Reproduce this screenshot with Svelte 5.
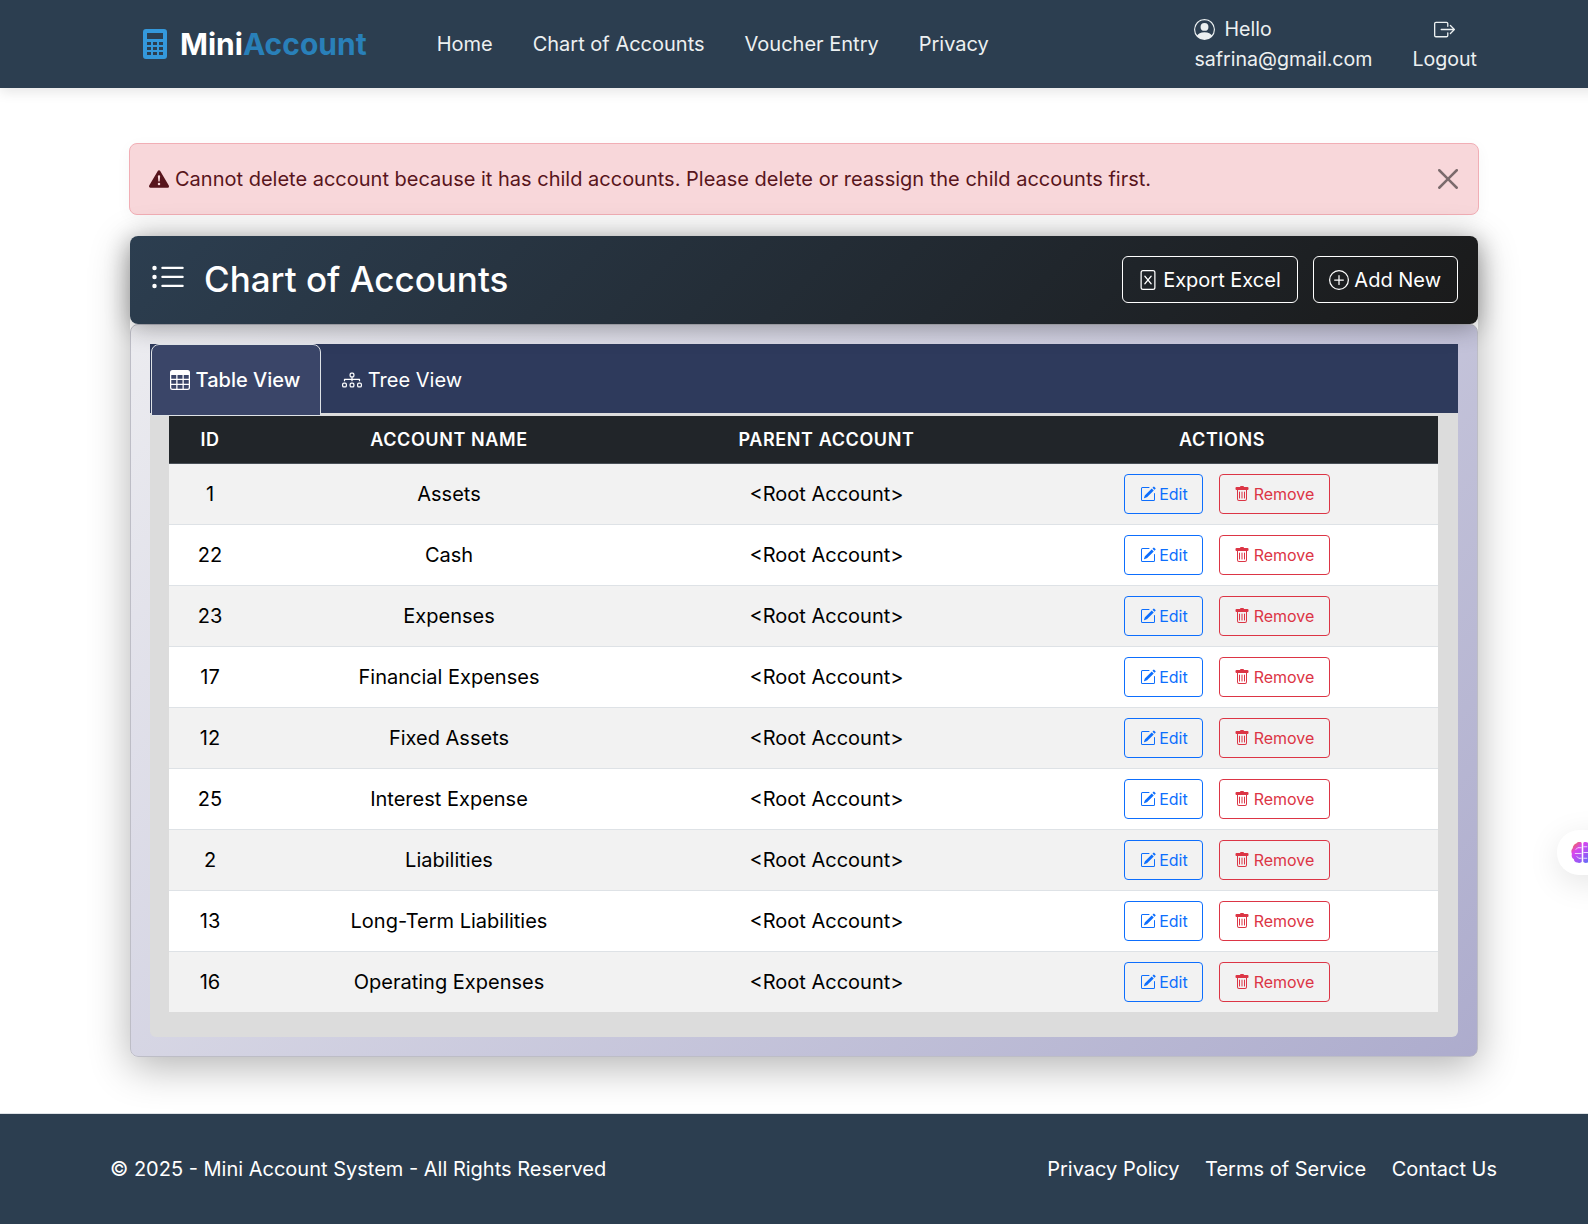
<script>
  const rows = [
    [1, 'Assets'], [22, 'Cash'], [23, 'Expenses'], [17, 'Financial Expenses'], [12, 'Fixed Assets'],
    [25, 'Interest Expense'], [2, 'Liabilities'], [13, 'Long-Term Liabilities'], [16, 'Operating Expenses']
  ];
</script>

<div class="page">
  <header class="nav">
    <a class="brand" href="#top">
      <svg class="calc" viewBox="0 0 24 30"><path fill-rule="evenodd" d="M3 0h18a3 3 0 0 1 3 3v24a3 3 0 0 1-3 3H3a3 3 0 0 1-3-3V3a3 3 0 0 1 3-3zM4 4v6h16V4zM4 13v3h4v-3zm6 0v3h4v-3zm6 0v3h4v-3zM4 18v3h4v-3zm6 0v3h4v-3zm6 0v3h4v-3zM4 23v3h4v-3zm6 0v3h4v-3zm6 0v3h4v-3z"/></svg>
      <span class="mini">Mini</span><span class="acct">Account</span>
    </a>
    <nav class="links">
      <a href="#top">Home</a><a href="#top">Chart of Accounts</a><a href="#top">Voucher Entry</a><a href="#top">Privacy</a>
    </nav>
    <div class="user">
      <a href="#top" class="hello">
        <span class="line"><svg class="i21 hi" viewBox="0 0 16 16"><path d="M11 6a3 3 0 1 1-6 0 3 3 0 0 1 6 0z"/><path fill-rule="evenodd" d="M0 8a8 8 0 1 1 16 0A8 8 0 0 1 0 8zm8-7a7 7 0 0 0-5.468 11.37C3.242 11.226 4.805 10 8 10s4.757 1.225 5.468 2.37A7 7 0 0 0 8 1z"/></svg>Hello</span>
        <span class="line">safrina@gmail.com</span>
      </a>
      <a href="#top" class="logout">
        <span class="line center"><svg class="i21" viewBox="0 0 16 16"><path fill-rule="evenodd" d="M10 12.5a.5.5 0 0 1-.5.5h-8a.5.5 0 0 1-.5-.5v-9a.5.5 0 0 1 .5-.5h8a.5.5 0 0 1 .5.5v2a.5.5 0 0 0 1 0v-2A1.5 1.5 0 0 0 9.5 2h-8A1.5 1.5 0 0 0 0 3.5v9A1.5 1.5 0 0 0 1.5 14h8a1.5 1.5 0 0 0 1.5-1.5v-2a.5.5 0 0 0-1 0v2z"/><path fill-rule="evenodd" d="M15.854 8.354a.5.5 0 0 0 0-.708l-3-3a.5.5 0 0 0-.708.708L14.293 7.5H5.5a.5.5 0 0 0 0 1h8.793l-2.147 2.146a.5.5 0 0 0 .708.708l3-3z"/></svg></span>
        <span class="line">Logout</span>
      </a>
    </div>
  </header>

  <main class="main">
    <div class="alert">
      <svg class="i20 warn" viewBox="0 0 16 16"><path d="M8.982 1.566a1.13 1.13 0 0 0-1.96 0L.165 13.233c-.457.778.091 1.767.98 1.767h13.713c.889 0 1.438-.99.98-1.767L8.982 1.566zM8 5c.535 0 .954.462.9.995l-.35 3.507a.552.552 0 0 1-1.1 0L7.1 5.995A.905.905 0 0 1 8 5zm.002 6a1 1 0 1 1 0 2 1 1 0 0 1 0-2z"/></svg>
      <span class="msg">Cannot delete account because it has child accounts. Please delete or reassign the child accounts first.</span>
      <svg class="close" viewBox="0 0 16 16"><path d="M.293.293a1 1 0 0 1 1.414 0L8 6.586 14.293.293a1 1 0 1 1 1.414 1.414L9.414 8l6.293 6.293a1 1 0 0 1-1.414 1.414L8 9.414l-6.293 6.293a1 1 0 0 1-1.414-1.414L6.586 8 .293 1.707a1 1 0 0 1 0-1.414z"/></svg>
    </div>

    <section class="card">
      <div class="card-head">
        <div class="title">
          <svg class="list" viewBox="0 0 16 16"><path fill-rule="evenodd" d="M5 11.5a.5.5 0 0 1 .5-.5h9a.5.5 0 0 1 0 1h-9a.5.5 0 0 1-.5-.5zm0-4a.5.5 0 0 1 .5-.5h9a.5.5 0 0 1 0 1h-9a.5.5 0 0 1-.5-.5zm0-4a.5.5 0 0 1 .5-.5h9a.5.5 0 0 1 0 1h-9a.5.5 0 0 1-.5-.5zm-3 1a1 1 0 1 0 0-2 1 1 0 0 0 0 2zm0 4a1 1 0 1 0 0-2 1 1 0 0 0 0 2zm0 4a1 1 0 1 0 0-2 1 1 0 0 0 0 2z"/></svg>
          <h1>Chart of Accounts</h1>
        </div>
        <div class="head-btns">
          <a href="#top" class="hbtn"><svg class="i20" viewBox="0 0 16 16"><path d="M5.18 4.616a.5.5 0 0 1 .704.064L8 7.219l2.116-2.54a.5.5 0 1 1 .768.641L8.651 8l2.233 2.68a.5.5 0 0 1-.768.64L8 8.781l-2.116 2.54a.5.5 0 0 1-.768-.641L7.349 8 5.116 5.32a.5.5 0 0 1 .064-.704z"/><path d="M2 2a2 2 0 0 1 2-2h8a2 2 0 0 1 2 2v12a2 2 0 0 1-2 2H4a2 2 0 0 1-2-2V2zm10-1H4a1 1 0 0 0-1 1v12a1 1 0 0 0 1 1h8a1 1 0 0 0 1-1V2a1 1 0 0 0-1-1z"/></svg>Export Excel</a>
          <a href="#top" class="hbtn"><svg class="i20" viewBox="0 0 16 16"><path d="M8 15A7 7 0 1 1 8 1a7 7 0 0 1 0 14zm0 1A8 8 0 1 0 8 0a8 8 0 0 0 0 16z"/><path d="M8 4a.5.5 0 0 1 .5.5v3h3a.5.5 0 0 1 0 1h-3v3a.5.5 0 0 1-1 0v-3h-3a.5.5 0 0 1 0-1h3v-3A.5.5 0 0 1 8 4z"/></svg>Add New</a>
        </div>
      </div>

      <div class="card-body">
        <div class="panel">
          <div class="tabs">
            <a href="#top" class="tab active"><svg class="i20" viewBox="0 0 16 16"><path d="M0 2a2 2 0 0 1 2-2h12a2 2 0 0 1 2 2v12a2 2 0 0 1-2 2H2a2 2 0 0 1-2-2V2zm15 2h-4v3h4V4zm0 4h-4v3h4V8zm0 4h-4v3h3a1 1 0 0 0 1-1v-2zm-5 3v-3H6v3h4zm-5 0v-3H1v2a1 1 0 0 0 1 1h3zm-4-4h4V8H1v3zm0-4h4V4H1v3zm5-3v3h4V4H6zm4 4H6v3h4V8z"/></svg>Table View</a>
            <a href="#top" class="tab"><svg class="i20" viewBox="0 0 16 16"><path fill-rule="evenodd" d="M6 3.5A1.5 1.5 0 0 1 7.5 2h1A1.5 1.5 0 0 1 10 3.5v1A1.5 1.5 0 0 1 8.5 6v1H14a.5.5 0 0 1 .5.5v1a.5.5 0 0 1-1 0V8h-5v.5a.5.5 0 0 1-1 0V8h-5v.5a.5.5 0 0 1-1 0v-1A.5.5 0 0 1 2 7h5.5V6A1.5 1.5 0 0 1 6 4.5v-1zM8.5 5a.5.5 0 0 0 .5-.5v-1a.5.5 0 0 0-.5-.5h-1a.5.5 0 0 0-.5.5v1a.5.5 0 0 0 .5.5h1zM0 11.5A1.5 1.5 0 0 1 1.500 10h1A1.5 1.5 0 0 1 4 11.5v1A1.5 1.5 0 0 1 2.5 14h-1A1.5 1.5 0 0 1 0 12.5v-1zm1.5-.5a.5.5 0 0 0-.5.5v1a.5.5 0 0 0 .5.5h1a.5.5 0 0 0 .5-.5v-1a.5.5 0 0 0-.5-.5h-1zm4.5.5A1.5 1.5 0 0 1 7.5 10h1a1.5 1.5 0 0 1 1.5 1.5v1A1.5 1.5 0 0 1 8.5 14h-1A1.5 1.5 0 0 1 6 12.5v-1zm1.5-.5a.5.5 0 0 0-.5.5v1a.5.5 0 0 0 .5.5h1a.5.5 0 0 0 .5-.5v-1a.5.5 0 0 0-.5-.5h-1zm4.5.5a1.5 1.5 0 0 1 1.5-1.5h1a1.5 1.5 0 0 1 1.5 1.5v1a1.5 1.5 0 0 1-1.5 1.5h-1a1.5 1.5 0 0 1-1.5-1.5v-1zm1.5-.5a.5.5 0 0 0-.5.5v1a.5.5 0 0 0 .5.5h1a.5.5 0 0 0 .5-.5v-1a.5.5 0 0 0-.5-.5h-1z"/></svg>Tree View</a>
          </div>
          <div class="table-wrap">
            <table>
              <colgroup><col class="c1" /><col class="c2" /><col class="c3" /><col class="c4" /></colgroup>
              <thead><tr><th>ID</th><th>ACCOUNT NAME</th><th>PARENT ACCOUNT</th><th>ACTIONS</th></tr></thead>
              <tbody>
                {#each rows as r}
                  <tr>
                    <td>{r[0]}</td>
                    <td>{r[1]}</td>
                    <td>&lt;Root Account&gt;</td>
                    <td>
                      <div class="acts">
                        <a href="#top" class="btn edit"><svg class="i16" viewBox="0 0 16 16"><path d="M15.502 1.94a.5.5 0 0 1 0 .706L14.459 3.69l-2-2L13.502.646a.5.5 0 0 1 .707 0l1.293 1.293zm-1.75 2.456-2-2L4.939 9.21a.5.5 0 0 0-.121.196l-.805 2.414a.25.25 0 0 0 .316.316l2.414-.805a.5.5 0 0 0 .196-.12l6.813-6.814z"/><path fill-rule="evenodd" d="M1 13.5A1.5 1.5 0 0 0 2.5 15h11a1.5 1.5 0 0 0 1.5-1.5v-6a.5.5 0 0 0-1 0v6a.5.5 0 0 1-.5.5h-11a.5.5 0 0 1-.5-.5v-11a.5.5 0 0 1 .5-.5H9a.5.5 0 0 0 0-1H2.5A1.5 1.5 0 0 0 1 2.5v11z"/></svg>Edit</a>
                        <a href="#top" class="btn remove"><svg class="i16" viewBox="0 0 16 16"><path d="M2.5 1a1 1 0 0 0-1 1v1a1 1 0 0 0 1 1H3v9a2 2 0 0 0 2 2h6a2 2 0 0 0 2-2V4h.5a1 1 0 0 0 1-1V2a1 1 0 0 0-1-1H10a1 1 0 0 0-1-1H7a1 1 0 0 0-1 1H2.5zm1.500 3h8v9a1 1 0 0 1-1 1H5a1 1 0 0 1-1-1V4z"/><path d="M5.5 5.5a.5.5 0 0 1 .5.5v6a.5.5 0 0 1-1 0V6a.5.5 0 0 1 .5-.5zm2.500 0a.5.5 0 0 1 .5.5v6a.5.5 0 0 1-1 0V6a.5.5 0 0 1 .5-.5zm2.500 0a.5.5 0 0 1 .5.5v6a.5.5 0 0 1-1 0V6a.5.5 0 0 1 .5-.5z"/></svg>Remove</a>
                      </div>
                    </td>
                  </tr>
                {/each}
              </tbody>
            </table>
          </div>
        </div>
      </div>
    </section>
  </main>

  <footer class="footer">
    <span>© 2025 - Mini Account System - All Rights Reserved</span>
    <div class="foot-links"><a href="#top">Privacy Policy</a><a href="#top">Terms of Service</a><a href="#top">Contact Us</a></div>
  </footer>

  <div class="float-ai">
    <svg viewBox="0 0 24 24" class="brain">
      <defs><linearGradient id="bg" x1="0" y1="0" x2="1" y2="1"><stop offset="0" stop-color="#f97316"/><stop offset=".3" stop-color="#d946ef"/><stop offset=".7" stop-color="#8b5cf6"/><stop offset="1" stop-color="#3b82f6"/></linearGradient></defs>
      <path fill="url(#bg)" d="M11.200 2.500V21.500C11.200 23 8 23.500 6.500 22.500 4.500 22.500 3 20.800 3 19 1 18 .2 15.500 1 13.500 0 11.500.2 9 1.800 7.500 2 5 3.500 3 5.500 2.500 7 .5 11.200 .5 11.200 2.500zM12.800 2.500V21.500C12.800 23 16 23.500 17.500 22.500 19.500 22.500 21 20.800 21 19 23 18 23.800 15.500 23 13.500 24 11.500 23.800 9 22.200 7.500 22 5 20.500 3 18.500 2.500 17 .5 12.800 .5 12.800 2.500z"/>
      <path fill="none" stroke="#fff" stroke-width="1" opacity=".8" d="M11 7H7L5 9M11 13H4M11 18H8L6 16M13 6h4M13 12h7M13 18h4"/>
    </svg>
  </div>
</div>

<style>
  :global(html), :global(body) { margin: 0; overflow: hidden; background: #fff; }
  :global(*) { box-sizing: border-box; }
  a { color: inherit; text-decoration: none; }
  svg { fill: currentColor; flex: none; display: block; }
  .page { position: relative; width: 1608px; height: 1224px; font-family: Inter, "Liberation Sans", sans-serif; font-size: 20px; line-height: 30px; color: #000; display: flex; flex-direction: column; }
  .i20 { width: 20px; height: 20px; }
  .i21 { width: 21px; height: 21px; }
  .i16 { width: 16px; height: 16px; }

  .nav { height: 88px; background: #2c3e50; color: #ecf0f1; display: flex; align-items: center; padding: 0 131px 0 143px; box-shadow: 0 4px 12px rgba(0,0,0,.1); position: relative; z-index: 2; }
  .brand { display: flex; align-items: center; font-size: 30px; font-weight: 700; line-height: 36px; }
  .calc { width: 24px; height: 30px; color: #3498db; margin-right: 13px; }
  .mini { color: #fff; }
  .acct { color: #2980b9; }
  .links { display: flex; gap: 40px; margin-left: 70px; }
  .user { margin-left: auto; display: flex; gap: 40px; font-size: 19.6px; }
  .user a { display: flex; flex-direction: column; }
  .line { display: flex; align-items: center; height: 30px; }
  .center { justify-content: center; }
  .hi { margin-right: 9px; }

  .main { flex: 1; padding: 55px 129px 0; }
  .alert { height: 72px; background: #f8d7da; border: 1px solid #f1aeb5; border-radius: 8px; color: #58151c; display: flex; align-items: center; padding: 0 20px 0 19px; box-shadow: 0 4px 16px rgba(0,0,0,.04); }
  .warn { margin-right: 6px; }
  .close { width: 20px; height: 20px; margin-left: auto; opacity: .5; color: #000; }

  .card { margin: 21px 1px 0; border-radius: 8px; box-shadow: 0 10px 40px rgba(0,0,0,.3); }
  .card-head { height: 88px; background: linear-gradient(135deg, #2c3e50 0%, #1a1a1a 100%); color: #fff; display: flex; align-items: center; justify-content: space-between; padding: 0 20px 2px; position: relative; box-shadow: 0 4px 24px rgba(0,0,0,.32); border-radius: 8px; }
  .title { display: flex; align-items: center; }
  .list { width: 36px; height: 36px; margin-right: 18px; margin-top: -2px; }
  h1 { margin: 0; font-size: 35px; font-weight: 500; line-height: 42px; }
  .head-btns { display: flex; gap: 15px; }
  .hbtn { height: 47px; border: 1px solid #fff; border-radius: 6px; display: flex; align-items: center; gap: 5.6px; padding: 1px 16px 0 15px; }

  .card-body { padding: 19px; height: 733px; border: 1px solid #bdbdc6; border-radius: 8px; background: linear-gradient(135deg, #ececf0 0%, #adaccd 100%); }
  .panel { height: 693px; background: #dcdcdc; border-radius: 0 0 6px 6px; }
  .tabs { height: 69px; background: #2e3a5c; display: flex; align-items: stretch; }
  .tab { display: flex; align-items: center; gap: 5.6px; padding: 0 20px; color: #fff; height: 71px; border: 1px solid transparent; }
  .tab.active { background: #3a4568; border-color: #dee2e6; border-radius: 8px 8px 0 0; margin-left: 1px; height: 72px; padding: 0 20px 0 18px; font-weight: 500; position: relative; }
  .table-wrap { padding: 3px 20px 0 19px; }
  table { width: 100%; border-collapse: collapse; table-layout: fixed; }
  .c1 { width: 82px; } .c2 { width: 396px; } .c3 { width: 359px; } .c4 { width: 432px; }
  th { height: 47px; background: #212529; color: #fff; font-size: 18px; font-weight: 600; letter-spacing: .6px; padding: 2px 0 0; text-align: center; border-bottom: 1px solid #495057; }
  td { height: 61px; padding: 0; text-align: center; border-bottom: 1px solid #dee2e6; background: #fff; }
  tbody tr:nth-child(odd) td { background: #f2f2f2; }
  tbody tr:last-child td { border-bottom: 0; }
  .acts { display: flex; justify-content: center; gap: 16px; padding-left: 10px; }
  .btn { height: 40px; border: 1px solid; border-radius: 4px; font-size: 16px; display: flex; align-items: center; gap: 4px; padding: 0 14px; line-height: 24px; }
  .edit { color: #0d6efd; padding: 0 14px 0 15px; gap: 3px; }
  .remove { color: #dc3545; padding-right: 14.5px; }

  .footer { height: 111px; background: #2c3e50; color: #fff; display: flex; align-items: center; justify-content: space-between; padding: 0 111px 1px 110px; border-top: 1px solid #dee2e6; }
  .foot-links { display: flex; gap: 25.5px; }

  .float-ai { position: absolute; left: 1557px; top: 830px; width: 70px; height: 45px; background: #fff; border-radius: 22px; box-shadow: 0 8px 32px rgba(0,0,0,.1); display: flex; align-items: center; padding-left: 14px; z-index: 5; }
  .brain { width: 23px; height: 23px; }
</style>
